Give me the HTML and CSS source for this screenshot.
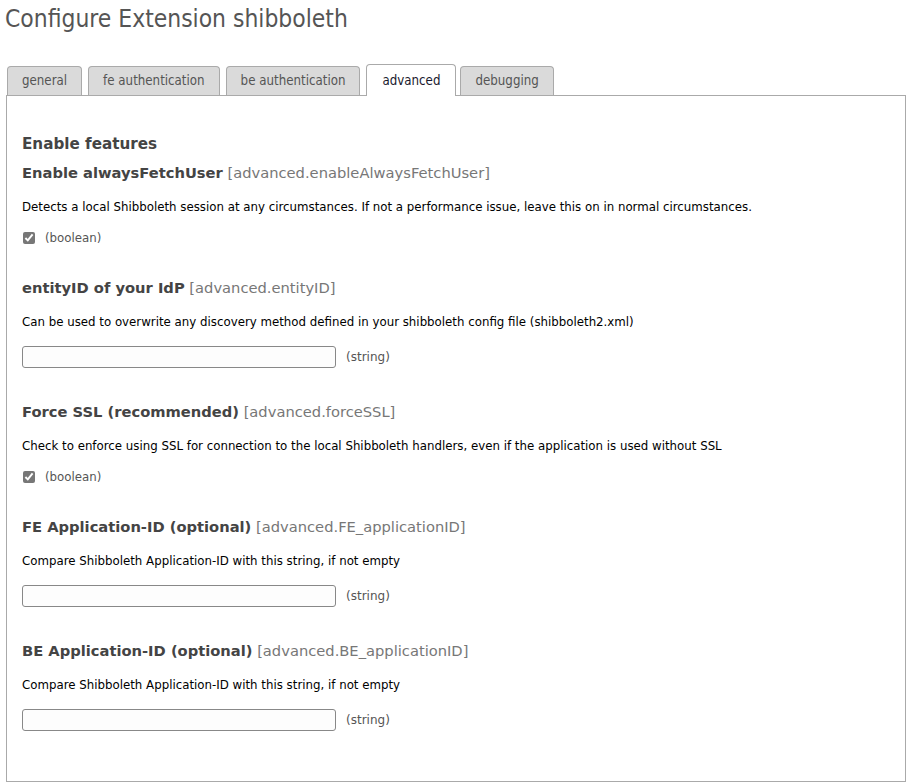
FILE: index.html
```html
<!DOCTYPE html>
<html>
<head>
<meta charset="utf-8">
<link rel="stylesheet" href="styles.css">
</head>
<body>
<h1 class="title">Configure Extension shibboleth</h1>
<div class="tabs">
  <div class="tab">general</div>
  <div class="tab">fe authentication</div>
  <div class="tab">be authentication</div>
  <div class="tab active">advanced</div>
  <div class="tab">debugging</div>
</div>
<div class="panel">
  <h2 class="group">Enable features</h2>

  <div class="field">
    <div class="label"><b>Enable alwaysFetchUser</b> <span class="key">[advanced.enableAlwaysFetchUser]</span></div>
    <p class="desc">Detects a local Shibboleth session at any circumstances. If not a performance issue, leave this on in normal circumstances.</p>
    <div class="control"><input type="checkbox" checked class="check"><span class="type">(boolean)</span></div>
  </div>

  <div class="field">
    <div class="label"><b>entityID of your IdP</b> <span class="key">[advanced.entityID]</span></div>
    <p class="desc">Can be used to overwrite any discovery method defined in your shibboleth config file (shibboleth2.xml)</p>
    <div class="control txt"><input type="text" class="text"><span class="type">(string)</span></div>
  </div>

  <div class="field">
    <div class="label"><b>Force SSL (recommended)</b> <span class="key">[advanced.forceSSL]</span></div>
    <p class="desc">Check to enforce using SSL for connection to the local Shibboleth handlers, even if the application is used without SSL</p>
    <div class="control"><input type="checkbox" checked class="check"><span class="type">(boolean)</span></div>
  </div>

  <div class="field">
    <div class="label"><b>FE Application-ID (optional)</b> <span class="key">[advanced.FE_applicationID]</span></div>
    <p class="desc">Compare Shibboleth Application-ID with this string, if not empty</p>
    <div class="control txt"><input type="text" class="text"><span class="type">(string)</span></div>
  </div>

  <div class="field">
    <div class="label"><b>BE Application-ID (optional)</b> <span class="key">[advanced.BE_applicationID]</span></div>
    <p class="desc">Compare Shibboleth Application-ID with this string, if not empty</p>
    <div class="control txt"><input type="text" class="text"><span class="type">(string)</span></div>
  </div>
</div>
</body>
</html>
```
FILE: styles.css
```css
html, body { background: #fff; }
body {
  margin: 0;
  font-family: "DejaVu Sans", Verdana, sans-serif;
  color: #000;
}
.title {
  margin: 0;
  padding: 4px 0 0 5px;
  font-family: "DejaVu Sans Condensed", "DejaVu Sans", sans-serif;
  font-weight: normal;
  font-size: 24.4px;
  line-height: 30px;
  color: #555;
}
.tabs {
  display: flex;
  gap: 6px;
  padding-left: 7px;
  margin-top: 30px;
  align-items: flex-end;
  position: relative;
  z-index: 1;
}
.tab {
  height: 28px;
  line-height: 28px;
  padding: 0 14px;
  border: 1px solid #aaa;
  border-bottom: none;
  border-radius: 4px 4px 0 0;
  background: #dadada;
  font-family: "DejaVu Sans Condensed", "DejaVu Sans", sans-serif;
  font-size: 13.2px;
  color: #555;
}
.tab.active {
  background: #fff;
  height: 31px;
  line-height: 31px;
  margin-bottom: -1px;
  padding: 0 15px;
  color: #1a1a2e;
}
.tab.active + .tab { margin-left: -2px; }
.panel {
  margin: 0 8px 0 6px;
  border: 1px solid #aaa;
  padding: 36px 15px 48px;
}
.group {
  margin: 0 0 5px;
  font-size: 15.2px;
  font-weight: bold;
  line-height: 24px;
  color: #444;
}
.field { margin-bottom: 30px; }
.field:last-child { margin-bottom: 0; }
.label {
  font-size: 14.7px;
  line-height: 24px;
  color: #444;
}
.label b { color: #444; }
.key { color: #777; }
.desc {
  margin: 14px 0 15px;
  font-size: 11.8px;
  line-height: 16px;
  color: #000;
}
.control {
  display: flex;
  align-items: center;
  height: 16px;
}
.control.txt {
  height: 25px;
  align-items: flex-start;
  padding-top: 1px;
  box-sizing: border-box;
}
.check {
  margin: 0 10px 0 1px;
  width: 12px;
  height: 12px;
  accent-color: #777;
}
.text {
  box-sizing: border-box;
  width: 314px;
  height: 22px;
  margin: 0 10px 0 0;
  border: 1px solid #888;
  border-radius: 3px;
  background: #fdfdfd;
}
.type {
  font-size: 11.8px;
  color: #555;
}
.control.txt .type { font-size: 12px; line-height: 22px; }
```
